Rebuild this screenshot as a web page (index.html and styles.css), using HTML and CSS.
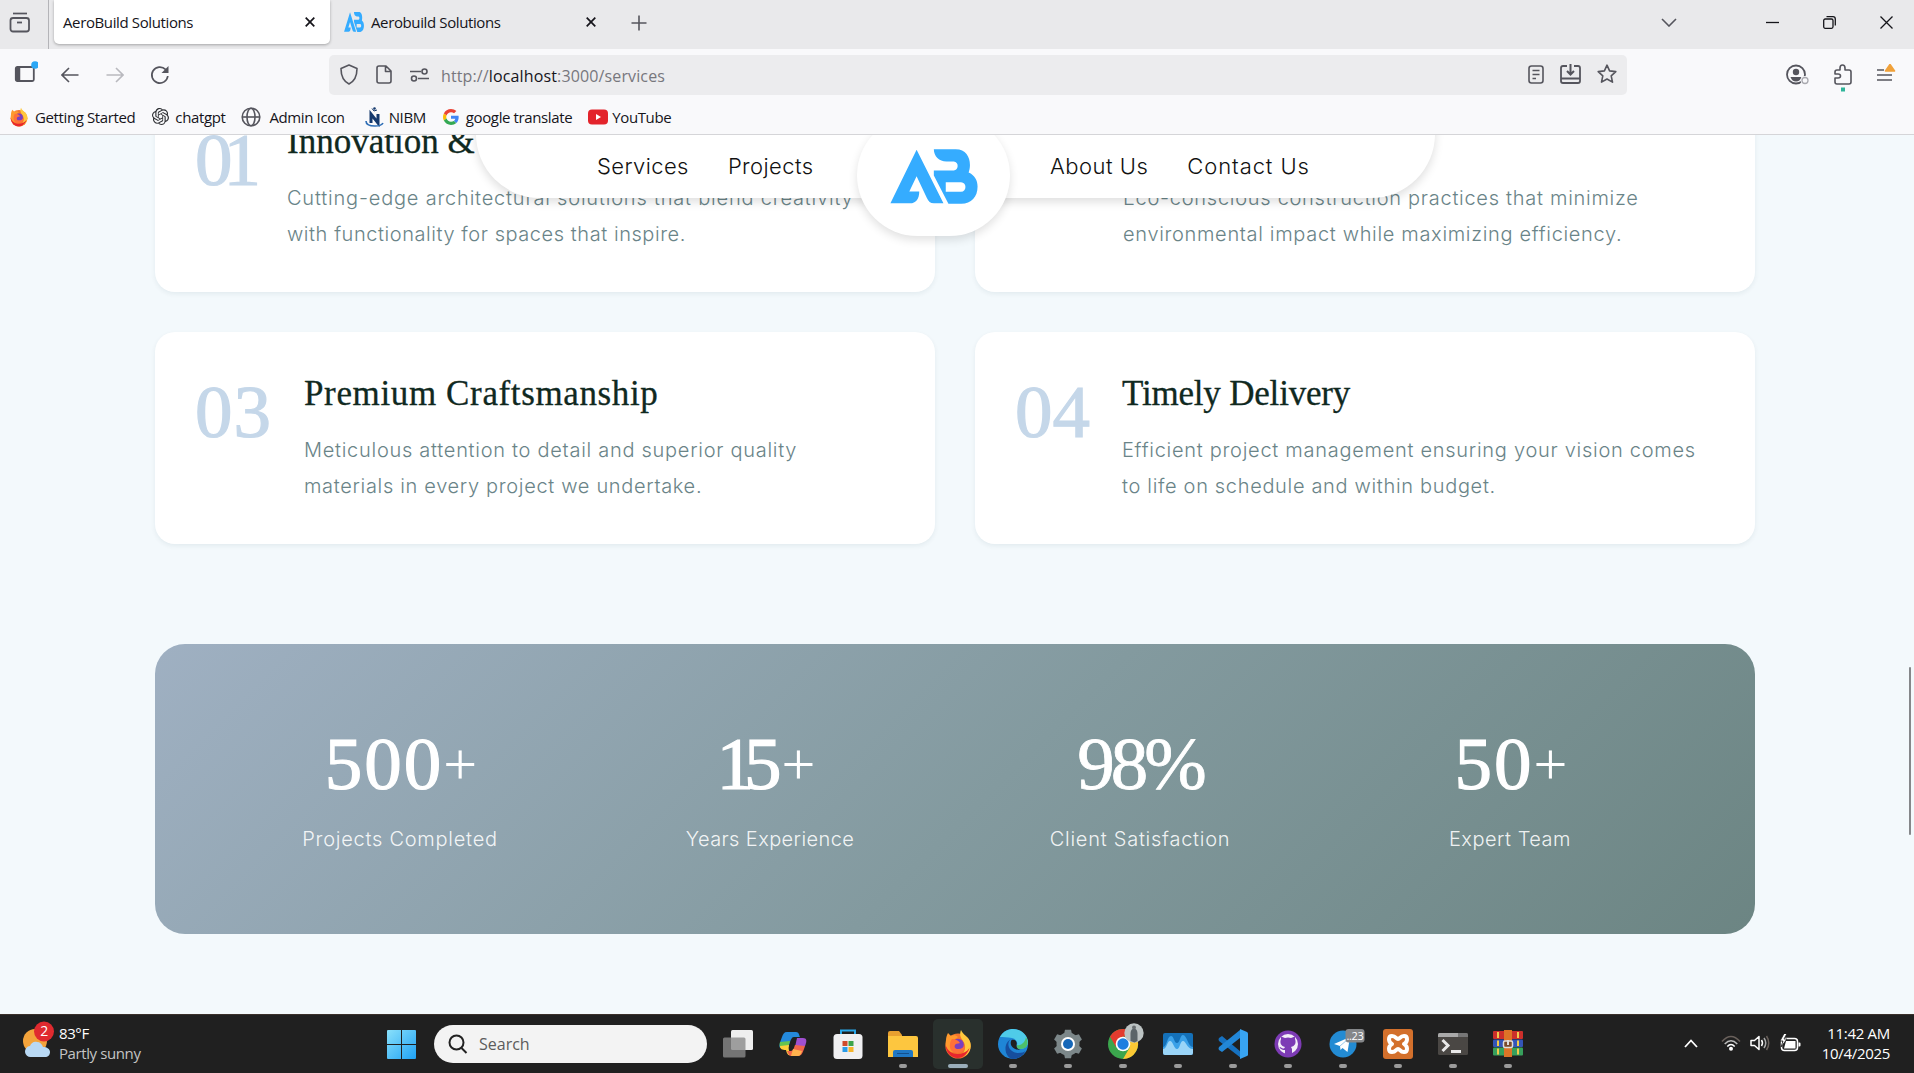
FILE: index.html
```html
<!DOCTYPE html>
<html lang="en">
<head>
<meta charset="utf-8">
<title>AeroBuild Solutions</title>
<link rel="stylesheet" href="styles.css">
</head>
<body>
<svg width="0" height="0" class="defs">
  <defs>
    <symbol id="ab" viewBox="120 50 265 166">
      <path fill="#35acff" d="M200 52 281 214H252C241 214 236 208 231 198L200 132 178 178H208C208 200 198 214 180 214H121Z"/>
      <path fill="#35acff" fill-rule="evenodd" d="M252 51H318C348 51 361 74 361 98 361 108 359 114 357 121 375 129 384 145 384 163 384 195 365 215 335 215H296L252 130V115H312C328 115 328 88 312 88H290C268 88 252 72 252 51ZM288 150V179H334C352 179 352 150 334 150Z"/>
    </symbol>
    <symbol id="fox" viewBox="0 0 30 30">
      <circle cx="15" cy="17" r="12.6" fill="#f5752c"/>
      <path fill="#ffc83d" d="M18 1c1 3 4 5 7 8 3 4 4 9 1 14-2 4-6 5-9 5 5-4 7-11 3-16-2-3-4-6-2-11Z"/>
      <path fill="#ff9a2e" d="M3 11c0-3 1-5 2-7l3 3c2-1 5-1 7 1-2 2-5 2-6 5-2 4 0 8 4 9l-6 2c-4-3-5-8-4-13Z"/>
      <circle cx="15" cy="15.500" r="5.800" fill="#7a3fc0"/>
      <path fill="#ff7139" d="M9 10c3 0 6 1 8 4-2 1-4 0-5 2s0 4 3 4c4 0 6-2 7-4 0 5-3 8-8 8s-8-4-7-9c0-2 1-4 2-5Z"/>
      <path fill="#e8262d" d="M2.500 16c2 6 7 9 12 9 5 0 9-2 12-6-2 6-6 10-12 10S3 24 2.500 16Z"/>
    </symbol>
  </defs>
</svg>

<header class="browser">
  <div class="tabs">
    <div class="firefox-view">
      <svg width="22" height="22" viewBox="0 0 22 22" class="line"><path d="M4 1.500h14" stroke-width="1.700"/><rect x="1.500" y="6" width="18.500" height="13.500" rx="2.500" stroke-width="1.800"/><path d="M8 10.500h5" stroke-width="1.800"/></svg>
    </div>
    <div class="tab active"><span>AeroBuild Solutions</span><svg class="x" width="10" height="10" viewBox="0 0 10 10"><path d="m.7.700 8.600 8.600M9.300.700.700 9.300"/></svg></div>
    <div class="tab"><svg class="fav" width="20" height="20" viewBox="120 50 265 166" preserveAspectRatio="none"><use href="#ab" x="120" y="50" width="265" height="166"/></svg><span>Aerobuild Solutions</span><svg class="x" width="10" height="10" viewBox="0 0 10 10"><path d="m.7.700 8.600 8.600M9.300.700.700 9.300"/></svg></div>
    <svg class="line plus" width="16" height="16" viewBox="0 0 16 16"><path d="M8 .500v15M.500 8h15"/></svg>
    <div class="window-controls">
      <svg class="line" width="16" height="9" viewBox="0 0 16 9"><path d="m1 1 7 7 7-7"/></svg>
      <svg class="sharp" width="13" height="13" viewBox="0 0 13 13"><path d="M0 6.500h13"/></svg>
      <svg class="sharp" width="13" height="13" viewBox="0 0 13 13"><rect x=".7" y="3" width="9.300" height="9.300" rx="1.500"/><path d="M3.500.700H10Q12.300.700 12.300 3v6.500"/></svg>
      <svg class="sharp" width="13" height="13" viewBox="0 0 13 13"><path d="m.5.500 12 12M12.500.500l-12 12"/></svg>
    </div>
  </div>

  <div class="toolbar">
    <div class="nav-buttons">
      <svg width="24" height="24" viewBox="0 0 24 24" class="line"><rect x="1.800" y="6" width="18" height="14" rx="1.500" stroke-width="1.800"/><path d="M2.800 7v12M5 6.500v13" stroke-width="2.500"/><circle cx="21" cy="4" r="3.800" fill="#2ba7f5" stroke="none"/></svg>
      <svg width="18" height="16" viewBox="0 0 18 16" class="line"><path d="M17.500 8H1.500M8 1 1 8l7 7"/></svg>
      <svg width="18" height="16" viewBox="0 0 18 16" class="line faded"><path d="M.5 8h16M10 1l7 7-7 7"/></svg>
      <svg width="20" height="20" viewBox="0 0 20 20" class="line"><path d="M17.800 11A8 8 0 1 1 15.500 4.400L17.500 6.500" stroke-width="1.700"/><path d="M18.500 1v7h-7Z" fill="#55555d" stroke="none"/></svg>
    </div>
    <div class="urlbar">
      <svg class="line" width="18" height="21" viewBox="0 0 18 21"><path d="M9 1 17 4.500C17 11 15 17 9 20 3 17 1 11 1 4.500Z" stroke-linejoin="round"/></svg>
      <svg class="line" width="16" height="19" viewBox="0 0 16 19"><path d="M10 1H3Q1 1 1 3v13q0 2 2 2h10q2 0 2-2V6ZM9.500 1v5.500H15" stroke-linejoin="round"/></svg>
      <svg class="line" width="19" height="14" viewBox="0 0 19 14"><path d="M0 3.500h11M8 10.500h11"/><circle cx="14.500" cy="3.500" r="2.500"/><circle cx="4" cy="10.500" r="2.500"/></svg>
      <span class="url">http://<b>localhost</b>:3000/services</span>
      <div class="page-actions">
        <svg class="line" width="16" height="19" viewBox="0 0 16 19"><rect x="1" y="1" width="14" height="17" rx="2.500"/><path d="M4.500 5.500h7M4.500 9.500h7M4.500 13.500H8"/></svg>
        <svg class="line" width="21" height="20" viewBox="0 0 21 20"><path d="M7 2H3Q1 2 1 4v13q0 2 2 2h15q2 0 2-2V4q0-2-2-2h-4M1 14.500h19" stroke-width="1.800"/><path d="M10.500 0v9.500M7 7l3.500 3.500L14 7" stroke-width="2"/></svg>
        <svg class="line" width="20" height="20" viewBox="0 0 20 20"><path stroke-linejoin="round" d="m10 1.200 2.600 5.700 6.200.7-4.600 4.200 1.300 6.300L10 15l-5.500 3.100 1.300-6.300L1.200 7.600l6.200-.7Z"/></svg>
      </div>
    </div>
    <div class="tool-icons">
      <svg width="24" height="21" viewBox="0 0 24 21"><circle cx="10" cy="10.500" r="9" fill="none" stroke="#55555d" stroke-width="1.800"/><circle cx="10" cy="8" r="3.200" fill="#55555d"/><path fill="#55555d" d="M4.500 13h11c-1 3-3 4.500-5.500 4.500S5.500 16 4.500 13Z"/><circle cx="19" cy="16.500" r="4.500" fill="#f9f9fb"/><circle cx="19" cy="16.500" r="3" fill="none" stroke="#aaaab0" stroke-width="1.300"/></svg>
      <svg class="line" width="18" height="28" viewBox="0 0 18 28"><path stroke-linejoin="round" d="M6 6V4q0-3 2.500-3T11 4v2h4q2 0 2 2v10q0 2-2 2H3q-2 0-2-2v-4h3q2.500 0 2.500-2T4 10H1V8q0-2 2-2Z"/><path d="M7 23.500h4v4H7Z" fill="#2fb59a" stroke="none"/></svg>
      <svg width="20" height="20" viewBox="0 0 20 20" class="line"><path d="M1 6h7M1 11h15M1 16h15"/><path d="m14 .500 4.500 6.500h-9Z" fill="#f0a13a" stroke="#f0a13a" stroke-linejoin="round"/></svg>
    </div>
  </div>

  <div class="bookmarks">
    <span><svg width="20" height="20"><use href="#fox"/></svg>Getting Started</span>
    <span><svg width="17" height="17" viewBox="0 0 24 24"><path fill="#2b2d31" d="M22.282 9.821a5.985 5.985 0 0 0-.516-4.910 6.046 6.046 0 0 0-6.510-2.900A6.065 6.065 0 0 0 4.981 4.182a5.985 5.985 0 0 0-3.998 2.900 6.046 6.046 0 0 0 .743 7.097 5.980 5.980 0 0 0 .510 4.911 6.051 6.051 0 0 0 6.515 2.900A5.985 5.985 0 0 0 13.260 24a6.056 6.056 0 0 0 5.772-4.206 5.990 5.990 0 0 0 3.997-2.900 6.056 6.056 0 0 0-.747-7.073zM13.260 22.430a4.476 4.476 0 0 1-2.876-1.040l.141-.081 4.779-2.758a.795.795 0 0 0 .392-.681v-6.737l2.020 1.168a.071.071 0 0 1 .038.052v5.583a4.504 4.504 0 0 1-4.494 4.494zM3.600 18.304a4.470 4.470 0 0 1-.535-3.014l.142.085 4.783 2.759a.771.771 0 0 0 .780 0l5.843-3.369v2.332a.080.080 0 0 1-.033.062L9.740 19.950a4.500 4.500 0 0 1-6.140-1.646zM2.340 7.896a4.485 4.485 0 0 1 2.366-1.973V11.600a.766.766 0 0 0 .388.676l5.815 3.355-2.020 1.168a.076.076 0 0 1-.071 0l-4.830-2.786A4.504 4.504 0 0 1 2.340 7.872zm16.597 3.855-5.833-3.387L15.119 7.200a.076.076 0 0 1 .071 0l4.830 2.791a4.494 4.494 0 0 1-.676 8.105v-5.678a.790.790 0 0 0-.407-.667zm2.010-3.023-.141-.085-4.774-2.782a.776.776 0 0 0-.785 0L9.409 9.230V6.897a.066.066 0 0 1 .028-.061l4.830-2.787a4.500 4.500 0 0 1 6.680 4.660zM8.307 12.863l-2.020-1.164a.080.080 0 0 1-.038-.057V6.075a4.500 4.500 0 0 1 7.375-3.453l-.142.080L8.704 5.460a.795.795 0 0 0-.393.681zm1.097-2.365 2.602-1.500 2.607 1.500v2.999l-2.597 1.500-2.607-1.500Z"/></svg>chatgpt</span>
    <span><svg width="20" height="20" viewBox="0 0 20 20" class="line"><circle cx="10" cy="10" r="8.800"/><ellipse cx="10" cy="10" rx="4" ry="8.800"/><path d="M1 10h18"/></svg>Admin Icon</span>
    <span><svg width="19" height="20" viewBox="0 0 19 20"><path fill="none" stroke="#15396d" stroke-width="3" d="M6 16V7l7 9V7"/><path fill="none" stroke="#2d6db5" stroke-width="1.600" d="M1 14c0 4 5 5 9 5 4 0 7-1 8-3"/><path d="M7 1.500 9 4l3-1" stroke="#15396d" fill="none"/><circle cx="9.500" cy="1.500" r="1.300" fill="#15396d"/></svg>NIBM</span>
    <span><svg width="16" height="16" viewBox="0 0 48 48"><path fill="#ea4335" d="M24 9.500c3.540 0 6.710 1.220 9.210 3.600l6.850-6.850C35.900 2.380 30.470 0 24 0 14.620 0 6.510 5.380 2.560 13.220l7.980 6.190C12.430 13.720 17.740 9.500 24 9.500z"/><path fill="#4285f4" d="M46.980 24.550c0-1.570-.15-3.090-.38-4.550H24v9.020h12.940c-.58 2.960-2.260 5.480-4.780 7.180l7.730 6c4.510-4.180 7.090-10.360 7.090-17.650z"/><path fill="#fbbc05" d="M10.530 28.590c-.48-1.450-.76-2.990-.76-4.590s.27-3.140.76-4.590l-7.980-6.190C.92 16.460 0 20.120 0 24s.92 7.540 2.560 10.780l7.970-6.190z"/><path fill="#34a853" d="M24 48c6.480 0 11.930-2.130 15.890-5.810l-7.730-6c-2.150 1.450-4.920 2.300-8.160 2.300-6.260 0-11.570-4.220-13.470-9.910l-7.980 6.190C6.510 42.620 14.620 48 24 48z"/></svg>google translate</span>
    <span><svg width="20" height="16" viewBox="0 0 20 16"><rect width="20" height="15" y=".5" rx="4" fill="#e3232b"/><path d="m8 5 5 3-5 3Z" fill="#fff"/></svg>YouTube</span>
  </div>
</header>

<main class="viewport">
  <nav class="site-nav">
    <div class="links left"><a>Services</a><a>Projects</a></div>
    <div class="links right"><a>About Us</a><a class="contact">Contact Us</a></div>
    <div class="logo"><svg width="88" height="55"><use href="#ab"/></svg></div>
  </nav>

  <div class="page">
    <section class="cards">
      <article class="card c1"><div class="num">01</div><div><h3>Innovation &amp;</h3><p><span>Cutting-edge architectural solutions that blend creativity</span><br><span class="s2">with functionality for spaces that inspire.</span></p></div></article>
      <article class="card c2"><div class="num"></div><div><h3></h3><p><span>Eco-conscious construction practices that minimize</span><br><span class="s2">environmental impact while maximizing efficiency.</span></p></div></article>
      <article class="card c3"><div class="num">03</div><div><h3>Premium Craftsmanship</h3><p><span>Meticulous attention to detail and superior quality</span><br><span class="s2">materials in every project we undertake.</span></p></div></article>
      <article class="card c4"><div class="num">04</div><div><h3>Timely Delivery</h3><p><span>Efficient project management ensuring your vision comes</span><br><span class="s2">to life on schedule and within budget.</span></p></div></article>
    </section>
    <section class="stats">
      <div class="stat"><strong>500<i>+</i></strong><span>Projects Completed</span></div>
      <div class="stat years"><strong><em>1</em>5<i>+</i></strong><span>Years Experience</span></div>
      <div class="stat percent"><strong>98%</strong><span>Client Satisfaction</span></div>
      <div class="stat team"><strong>50<i>+</i></strong><span>Expert Team</span></div>
    </section>
  </div>
  <div class="scroll-thumb"></div>
</main>

<footer class="taskbar">
  <div class="weather">
    <svg width="34" height="38" viewBox="0 0 34 38"><circle cx="13" cy="20" r="12" fill="#f3a33b"/><path fill="#b9d9f4" d="M9 36a5.500 5.500 0 0 1-1-11c1-3 4-5 7-4 3 0 5 2 6 5 4 0 7 2 7 5s-2 5-5 5Z"/><circle cx="22" cy="10.500" r="10" fill="#e02a2f"/><text x="22" y="15.300" text-anchor="middle" fill="#fff" font-size="14">2</text></svg>
    <div>83°F<br><span>Partly sunny</span></div>
  </div>
  <svg class="start" width="29" height="29" viewBox="0 0 29 29"><defs><linearGradient id="win" x2="1" y2="1"><stop stop-color="#8ae0fa"/><stop offset="1" stop-color="#1fa2f5"/></linearGradient></defs><path fill="url(#win)" d="M1 0h13v14H0V1q0-1 1-1ZM15 0h13q1 0 1 1v13H15ZM0 15h14v14H1q-1 0-1-1ZM15 15h14v13q0 1-1 1H15Z"/></svg>
  <div class="search"><svg width="20" height="20" viewBox="0 0 20 20" fill="none" stroke="#222" stroke-width="2"><circle cx="8.500" cy="8.500" r="7"/><path d="m13.500 14 5 5"/></svg>Search</div>
  <div class="apps">
    <div class="app quiet"><svg width="30" height="30" viewBox="0 0 30 30"><rect x="8" y="1" width="22" height="20" rx="1.500" fill="#eee"/><rect x="0" y="8.500" width="22.500" height="20" rx="1.500" fill="#8a8a8a" fill-opacity=".8"/></svg></div>
    <div class="app quiet"><svg width="30" height="30" viewBox="0 0 30 30"><path fill="#2489dc" d="M9 3h9c3 0 3 3 4 5h-6c-2 0-3 2-4 5l-2 6H3c-3 0-1-6 1-11C5 5 6 3 9 3Z"/><path fill="#65c450" d="m2 13 10-1-2 7H4c-2 0-3-2-2-6Z"/><path fill="#ffcf3b" d="m2 17 9-1c-1 4 0 6 2 10-3 1-4-1-5-5-4 0-6-1-6-4Z"/><path fill="#a04fd0" d="M19 9h6c4 0 4 3 2 8l-3 1h-7Z"/><path fill="#f1654a" d="m17 16 10 1c-2 6-3 10-7 10h-7c-2 0-3-3-4-5h4c2 0 3-3 4-6Z"/><path fill="#ffb24d" d="m15 20 9 2c-1 3-2 5-4 5h-7Z"/></svg></div>
    <div class="app quiet"><svg width="30" height="30" viewBox="0 0 30 30"><path d="M8 7V1.500h14V7" fill="none" stroke="#29a7ea" stroke-width="2"/><rect x=".5" y="5" width="29" height="25" rx="3.500" fill="#f0f0f2"/><path fill="#d04a2b" d="M9.500 12h5v5h-5Z"/><path fill="#3da44a" d="M15.500 12h5v5h-5Z"/><path fill="#2a9be8" d="M9.500 18h5v5h-5Z"/><path fill="#f4b42c" d="M15.500 18h5v5h-5Z"/></svg></div>
    <div class="app"><svg width="30" height="30" viewBox="0 0 30 30"><path fill="#e8a030" d="M0 4q0-2 2-2h9l3 4v4H0Z"/><path fill="#fdc63f" d="M0 7h28q2 0 2 2v19H0Z"/><path fill="#1f77c4" d="M5 28v-5q0-2 2-2h16q2 0 2 2v5Z"/><path stroke="#134f8c" d="M9 24.500h12"/></svg></div>
    <div class="app current"><svg width="30" height="30"><use href="#fox"/></svg></div>
    <div class="app"><svg width="30" height="30" viewBox="0 0 30 30"><circle cx="15" cy="15" r="15" fill="#1f86d6"/><path fill="#4fcbe8" d="M2 8C5 2 11 0 15 0c9 0 15 7 15 13 0 4-3 7-8 7-3 0-4-2-3-4 1-3-1-6-5-7-5-1-9-1-12-1Z"/><path fill="#4dc06b" d="M28 8c3 6 2 12-6 12-3 0-4-2-3-4 2 1 8-1 9-8Z"/><path fill="#164e9e" d="M13 10c-6 5-1 14 7 14 4 0 6-1 7.500-2C25 27 20 30 15 30 7 29 4 15 13 10Z"/><path fill="#202020" d="M13.500 11c4-1 6 2 5 5 0 3 1 4 4 4.500-6 1-12-4-9-9.500Z"/></svg></div>
    <div class="app"><svg width="30" height="30" viewBox="0 0 30 30"><g fill="#7c8789"><circle cx="15" cy="15" r="11.500"/><path id="tooth" d="M11 5 12 .700h6L19 5Z"/><use href="#tooth" transform="rotate(60 15 15)"/><use href="#tooth" transform="rotate(120 15 15)"/><use href="#tooth" transform="rotate(180 15 15)"/><use href="#tooth" transform="rotate(240 15 15)"/><use href="#tooth" transform="rotate(300 15 15)"/></g><circle cx="15" cy="15" r="7" fill="#fff"/><circle cx="15" cy="15" r="5" fill="#1667b8"/></svg></div>
    <div class="app"><svg width="30" height="30" viewBox="0 0 30 30" class="spill"><circle cx="15" cy="15" r="15" fill="#3ba64d"/><path fill="#e33b2e" d="M2 7.500A15 15 0 0 1 28 7.500H15L8 18Z"/><path fill="#fcc934" d="M28 7.500A15 15 0 0 1 15 30l7-12-3-10.500Z"/><circle cx="15" cy="15" r="7.300" fill="#fff"/><circle cx="15" cy="15" r="5.700" fill="#1e7fe0"/><circle cx="26" cy="4" r="9.700" fill="#bcc3c3"/><path fill="#5a6468" d="M22.500 12V5q0-4 2-5h3q2 1 2 5v7l-3 1.500Z"/><circle cx="26" cy="-1.500" r="2" fill="#6a6f72"/></svg></div>
    <div class="app"><svg width="30" height="30" viewBox="0 0 30 30"><rect y="4" width="30" height="22" rx="2" fill="#1470b8"/><path fill="#3aa0e8" d="M0 18c4 0 4-11 8-11 3 0 3 7 6 7s3-8 6-8c4 0 5 12 10 12v6H0Z"/><path fill="#9ad4f7" d="M0 20c4 0 4-8 7-8s4 8 7 8 3-8 6-8 4 8 10 8v4q0 2-2 2H2q-2 0-2-2Z"/></svg></div>
    <div class="app"><svg width="30" height="30" viewBox="0 0 30 30"><path fill="#1671c0" d="m1 9 3-2 19 16v6L1 12Q0 10 1 9Z"/><path fill="#2287d8" d="m1 21 3 2L22 9V1L1 18q-1 2 0 3Z"/><path fill="#38a4f2" d="m22 0 7 3q1 .5 1 1.500v21q0 1-1 1.500l-7 3Z"/></svg></div>
    <div class="app"><svg width="30" height="30" viewBox="0 0 30 30"><circle cx="15" cy="15" r="13.500" fill="#7d3bb5"/><circle cx="15" cy="15" r="10" fill="#f3eef8"/><path fill="#7d3bb5" d="M12 25v-4c-4 0-5-2-5.500-3 2 0 2 2 4.500 1.500l1-1.500c-4-1-5.500-4-4-8V7.500l4 1.500q3-.8 6 0l4-1.500V10c1.500 4 0 7-4 8l1 2v5Z"/></svg></div>
    <div class="app"><svg width="30" height="30" viewBox="0 0 30 30" class="spill"><circle cx="15" cy="15" r="13.500" fill="#238bd3"/><path fill="#fff" d="m6 15 16-7-2.500 15-5-4-2 2-.5-4Z"/><path d="m12 17 7-6" stroke="#9ac9ea"/><rect x="17.500" y="0" width="19" height="13.500" rx="3" fill="#85878a"/><text x="27" y="11" font-size="11" text-anchor="middle" fill="#fff">..23</text></svg></div>
    <div class="app"><svg width="30" height="30" viewBox="0 0 30 30"><rect width="30" height="30" rx="3" fill="#d3702c"/><path fill="none" stroke="#fff" stroke-width="4" stroke-linejoin="round" d="M9 7c-4 0-4 6 0 8-4 2-4 8 0 8s4-3 6-3 2 3 6 3 4-6 0-8c4-2 4-8 0-8s-4 3-6 3-2-3-6-3Z"/></svg></div>
    <div class="app"><svg width="30" height="30" viewBox="0 0 30 30"><rect y="4" width="30" height="22" rx="1.500" fill="#4a4744"/><path fill="#a9a9a9" d="M1.500 4H20v4H0V5.500Q0 4 1.500 4Z"/><path fill="#777" d="M20 4h8.500Q30 4 30 5.500V8H20Z"/><path fill="none" stroke="#e8e8e8" stroke-width="3" d="m4.500 11 5.500 5.500L4.500 22M13 22.500h10"/></svg></div>
    <div class="app"><svg width="30" height="30" viewBox="0 0 30 30"><rect y="2" width="30" height="8" rx="1" fill="#cc2f2b"/><rect y="10.500" width="30" height="7.500" rx="1" fill="#3455b8"/><rect y="18.500" width="30" height="8" rx="1" fill="#37a05c"/><path fill="#f1c94c" d="M4 3h2v6H4Zm0 8.500h2v5.500H4Zm0 8h2v6H4ZM24 3h2v6h-2Zm0 8.500h2v5.500h-2Zm0 8h2v6h-2Z"/><rect x="11" y="1" width="8" height="27" fill="#dd7427"/><rect x="10.500" y="12" width="9" height="6.500" rx="1.500" fill="#7a4a2a" stroke="#ddd" stroke-width="1.500"/><path stroke="#ddd" stroke-width="2" d="M15 11v5"/></svg></div>
  </div>
  <div class="tray">
    <svg width="14" height="9" viewBox="0 0 14 9" fill="none" stroke="#fff" stroke-width="1.800"><path d="m1 8 6-6.500L13 8"/></svg>
    <svg width="20" height="16" viewBox="0 0 20 16" fill="none" stroke-width="1.500"><path stroke="#69605b" d="M1 6.500Q10-3.500 19 6.500"/><path stroke="#bbb" d="M3.700 9Q10 2.500 16.300 9"/><path stroke="#fff" d="M6.300 11.500Q10 7.500 13.700 11.500"/><circle cx="10" cy="13.800" r="2" fill="#fff"/></svg>
    <svg width="20" height="18" viewBox="0 0 20 18" fill="none" stroke="#fff" stroke-width="1.500"><path stroke-linejoin="round" d="M1 6.500v5h3.500L9 15.500v-13L4.500 6.500Z"/><path d="M11.500 6q2 3 0 6"/><path stroke="#aaa" d="M14 4q3.500 5 0 10"/><path stroke="#69605b" d="M16.500 2q4.500 7 0 14"/></svg>
    <svg width="21" height="18" viewBox="0 0 21 18"><rect x="1.500" y="4.500" width="16" height="12" rx="3" fill="none" stroke="#fff" stroke-width="1.500"/><path fill="#fff" d="M6 7h9.500v7.500H4ZM18.500 8.500h1q1 0 1 1v2q0 1-1 1h-1Z"/><path fill="#fff" stroke="#202020" stroke-width=".8" d="M4-.5 0 7h3l-2 6 6-8H4l3-5.500Z"/></svg>
    <div class="clock">11:42 AM<br><span>10/4/2025</span></div>
  </div>
</footer>
</body>
</html>
```
FILE: styles.css
```css
* { box-sizing: border-box; }
body {
  margin: 0;
  width: 1914px;
  height: 1073px;
  display: flex;
  flex-direction: column;
  overflow: hidden;
  font-family: "Open Sans", "Noto Sans", sans-serif;
}
svg { display: block; flex: none; }
.defs { position: absolute; }

.line { fill: none; stroke: #55555d; stroke-width: 1.6; }
.line.faded { stroke: #b9b9be; }
.sharp { fill: none; stroke: #15151a; stroke-width: 1.3; }
.x { fill: none; stroke: #15141a; stroke-width: 1.7; }

/* Browser chrome */
.browser {
  height: 135px;
  flex: none;
  background: #f9f9fb;
  border-bottom: 1px solid #d5d5d8;
  font-size: 15px;
  letter-spacing: -0.38px;
  color: #15141a;
}
.tabs { display: flex; height: 49px; background: #e9e9eb; }
.firefox-view {
  width: 49px;
  padding: 12px 0 0 9px;
  border-right: 1px solid #b4b4b8;
}
.tab {
  display: flex;
  align-items: center;
  width: 276px;
  height: 44px;
  margin-left: 5px;
  padding: 0 15px 0 9px;
}
.tab .x { margin-left: auto; }
.tab.active {
  background: #fff;
  border-radius: 0 0 5px 5px;
  box-shadow: 0 1px 3px rgba(0, 0, 0, .3);
}
.fav { margin-right: 7px; }
.plus { margin: 15px 0 0 20px; }
.window-controls {
  display: flex;
  align-items: center;
  gap: 44px;
  height: 44px;
  margin-left: auto;
  padding-right: 21px;
}
.window-controls .line { margin-right: 45px; }

.toolbar { display: flex; height: 51px; align-items: center; }
.nav-buttons { display: flex; align-items: center; gap: 27px; width: 329px; padding-left: 14px; }
.nav-buttons svg:first-child { margin: -3px -4px 0 0; }
.nav-buttons svg:last-child { margin-left: -1px; }
.urlbar {
  display: flex;
  align-items: center;
  width: 1298px;
  height: 40px;
  padding: 0 10px 0 11px;
  border-radius: 5px;
  background: #ececee;
}
.urlbar > svg { margin-right: 18px; }
.urlbar > svg:nth-child(3) { margin-right: 12px; }
.url { font-size: 16px; letter-spacing: .13px; color: #77777d; padding-top: 3px; }
.url b { font-weight: 400; color: #15141a; }
.page-actions { display: flex; align-items: center; gap: 16px; margin: -1px 0 0 auto; }
.tool-icons { display: flex; gap: 24px; margin-left: auto; padding: 6px 18px 0 0; }
.bookmarks { display: flex; align-items: center; height: 33px; padding: 0 0 0 9px; gap: 17px; }
.bookmarks span { display: flex; align-items: center; gap: 6px; }
.bookmarks span:nth-child(3) { gap: 8px; margin-left: -1px; }
.bookmarks span:nth-child(4) { margin-left: 3px; gap: 5px; }
.bookmarks span:nth-child(5) { gap: 7px; }
.bookmarks span:nth-child(6) { gap: 4px; margin-left: -1px; }

/* Site */
.viewport {
  position: relative;
  height: 879px;
  flex: none;
  overflow: hidden;
  background: #f3f9fc;
  font-family: Inter, sans-serif;
}
.site-nav {
  position: absolute;
  z-index: 2;
  top: -20px;
  left: 476px;
  width: 959px;
  height: 83px;
  display: grid;
  grid-template-columns: 380px 1fr;
  border-radius: 0 0 64px 64px;
  background: #fff;
  box-shadow: 0 4px 10px rgba(0, 0, 0, .13);
}
.links { display: flex; gap: 39px; padding: 37px 0 0 121px; font-size: 22px; font-weight: 350; line-height: 28px; letter-spacing: .4px; color: #111; }
.links.right { padding-left: 194px; gap: 39px; letter-spacing: .5px; }
.links .contact { letter-spacing: .9px; }
.logo {
  position: absolute;
  left: 381px;
  top: 0;
  width: 153px;
  height: 121px;
  padding: 34px 0 0 33px;
  border-radius: 62px;
  background: #fff;
  box-shadow: 0 4px 10px rgba(0, 0, 0, .12);
}
.page { width: 1600px; margin: -55px 0 0 155px; }
.cards { display: grid; grid-template-columns: 1fr 1fr; gap: 40px; }
.card {
  display: flex;
  height: 212px;
  padding: 40px;
  border-radius: 20px;
  background: #fff;
  box-shadow: 0 2px 5px rgba(20, 50, 70, .07);
}
.num {
  flex: none;
  width: 109px;
  font: 75px/80px "Liberation Serif", serif;
  letter-spacing: 1px;
  color: #c5d7e9;
  -webkit-text-stroke: 1.2px #c5d7e9;
}
.c1 .num { width: 92px; letter-spacing: -9px; }
.c2 .num { width: 108px; }
.c4 .num { width: 107px; letter-spacing: 0; }
.card h3 {
  height: 44px;
  margin: 0 0 16px;
  font: 35px/44px "Liberation Serif", serif;
  letter-spacing: .63px;
  color: #10291f;
  -webkit-text-stroke: .3px #10291f;
}
.c1 h3 { letter-spacing: 0; }
.c4 h3 { letter-spacing: -.2px; }
.card p { margin: 0; font-size: 20px; font-weight: 300; line-height: 36px; letter-spacing: .72px; color: #6a8488; white-space: nowrap; }
.c1 p { letter-spacing: .8px; }
.s2 { letter-spacing: .67px; }
.c1 .s2 { letter-spacing: .56px; }

.stats {
  display: grid;
  grid-template-columns: repeat(4, 330px);
  gap: 40px;
  height: 290px;
  margin-top: 100px;
  padding: 80px;
  border-radius: 30px;
  background: linear-gradient(135deg, #9fb0c2 0%, #839a9f 52%, #6c8583 100%);
}
.stat { display: flex; flex-direction: column; align-items: center; color: #fff; }
.stat strong { font: 75px/80px "Liberation Serif", serif; letter-spacing: 2px; -webkit-text-stroke: 1.2px #fff; }
.stat i { font-style: normal; font-size: 60px; line-height: 1; vertical-align: 5px; letter-spacing: -2px; -webkit-text-stroke: 0; }
.stat em { font-style: normal; letter-spacing: -10px; margin-left: -10px; }
.years strong { letter-spacing: 0; }
.stat.percent strong { letter-spacing: -4px; -webkit-text-stroke: .8px #fff; }
.stat span { margin-top: 17px; font-size: 20px; font-weight: 300; line-height: 36px; letter-spacing: .75px; color: rgba(255, 255, 255, .9); }
.years span { letter-spacing: .4px; }
.stat.team span { letter-spacing: .5px; }
.scroll-thumb { position: absolute; right: 3px; top: 532px; width: 2px; height: 168px; background: #85878a; border-radius: 1px; }

/* Taskbar */
.taskbar {
  display: flex;
  height: 59px;
  flex: none;
  background: #202020;
  border-top: 1px solid #3a302b;
  color: #fff;
  font-size: 15px;
  line-height: 20px;
  letter-spacing: -.4px;
}
.weather { display: flex; width: 387px; padding: 6px 0 0 22px; gap: 3px; }
.weather div { padding-top: 2px; }
.weather div span { color: #c4c4c4; }
.start { margin-top: 15px; }
.search {
  display: flex;
  align-items: center;
  gap: 11px;
  width: 273px;
  height: 38px;
  margin: 10px 0 0 18px;
  padding: 0 14px;
  border-radius: 19px;
  background: #f3f3f3;
  color: #5c5c5c;
  font-size: 16px;
  letter-spacing: 0;
}
.apps { display: flex; margin-left: 3px; }
.app { display: flex; flex-direction: column; align-items: center; width: 55px; height: 58px; padding-top: 14px; }
.app::after { content: ""; width: 8px; height: 4px; margin-top: 5px; border-radius: 2px; background: #9a9a9a; }
.app.quiet::after { background: transparent; }
.app.current { width: 50px; height: 50px; margin: 4px 2.5px; padding-top: 10px; border-radius: 5px; background: #29302d; }
.app.current::after { width: 20px; background: #9aaeba; }
.spill { overflow: visible; }
.tray { display: flex; align-items: center; margin-left: auto; padding: 0 24px 2px 0; }
.tray svg:nth-child(1) { margin-right: 23px; }
.tray svg:nth-child(2) { margin-right: 9px; }
.tray svg:nth-child(3) { margin-right: 10px; }
.clock { width: 89px; text-align: right; letter-spacing: -.3px; }
```
